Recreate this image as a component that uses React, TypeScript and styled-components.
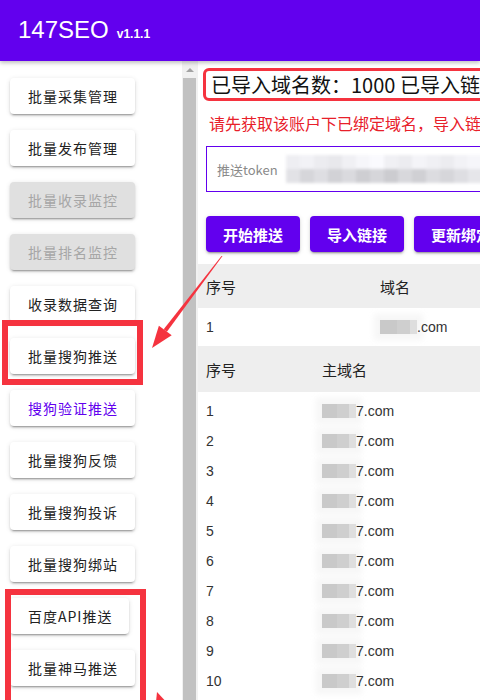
import React from 'react';
import styled, { createGlobalStyle } from 'styled-components';

const PURPLE = '#6200ee';
const MARK = '#f5333f';

const GlobalStyle = createGlobalStyle`
  html, body {
    margin: 0;
    padding: 0;
    overflow: hidden;
    background: #fff;
  }
  body {
    font-family: 'Noto Sans CJK SC', 'Liberation Sans', sans-serif;
    color: #222;
  }
`;

const Page = styled.div`
  position: relative;
  width: 480px;
  height: 700px;
  overflow: hidden;
  display: flex;
  flex-direction: column;
`;

const Header = styled.header`
  flex: none;
  height: 61px;
  background: ${PURPLE};
  display: flex;
  align-items: baseline;
  padding: 15px 0 0 18px;
  box-sizing: border-box;
  color: #fff;
  box-shadow: 0 2px 4px rgba(0, 0, 0, 0.25);
  position: relative;
  z-index: 1;
`;

const Brand = styled.span`
  font-family: 'Liberation Sans', Arial, sans-serif;
  font-size: 24px;
  line-height: 30px;
`;

const Version = styled.span`
  font-family: 'Liberation Sans', Arial, sans-serif;
  font-size: 12px;
  font-weight: bold;
  margin-left: 8px;
`;

const Body = styled.div`
  flex: 1;
  display: flex;
  min-height: 0;
`;

const Sidebar = styled.nav`
  flex: none;
  width: 172px;
  padding: 17px 0 0 10px;
  display: flex;
  flex-direction: column;
  align-items: flex-start;
  gap: 16px;
`;

const NavButton = styled.button<{ $disabled?: boolean; $active?: boolean }>`
  height: 36px;
  padding: 0 17px 0 18px;
  border: none;
  border-radius: 4px;
  font-family: 'Noto Sans CJK SC', sans-serif;
  font-size: 14px;
  letter-spacing: 1px;
  white-space: nowrap;
  cursor: pointer;
  background: ${({ $disabled }) => ($disabled ? '#e0e0e0' : '#fff')};
  color: ${({ $disabled, $active }) => ($disabled ? '#a6a6a6' : $active ? PURPLE : '#222')};
  box-shadow: 0 3px 1px -2px rgba(0, 0, 0, 0.2), 0 2px 2px 0 rgba(0, 0, 0, 0.14),
    0 1px 5px 0 rgba(0, 0, 0, 0.12);
`;

const ScrollTrack = styled.div`
  flex: none;
  width: 16px;
  background: #f1f1f1;
  display: flex;
  flex-direction: column;
  align-items: stretch;
`;

const ScrollArrow = styled.div`
  height: 17px;
  display: flex;
  align-items: center;
  justify-content: center;
  &:after {
    content: '';
    border-left: 4px solid transparent;
    border-right: 4px solid transparent;
    border-bottom: 4px solid #a3a3a3;
  }
`;

const ScrollThumb = styled.div`
  flex: 1;
  margin: 0 2px 0 1px;
  background: #c1c1c1;
`;

const Main = styled.main`
  flex: 1;
  min-width: 0;
  overflow: hidden;
`;

const CountBox = styled.div`
  margin: 7px 0 0 5px;
  width: max-content;
  height: 33px;
  box-sizing: border-box;
  border: 3px solid ${MARK};
  border-radius: 6px;
  padding: 0 5px;
  display: flex;
  align-items: center;
  font-size: 20px;
  white-space: nowrap;
  color: #111;
`;

const Notice = styled.div`
  margin: 11px 0 0 11px;
  font-size: 16px;
  line-height: 22px;
  color: #e8202a;
  white-space: nowrap;
`;

const TokenField = styled.div`
  margin: 12px 0 0 8px;
  width: 320px;
  height: 46px;
  box-sizing: border-box;
  border: 1px solid ${PURPLE};
  display: flex;
  align-items: center;
  padding-left: 10px;
  gap: 8px;
`;

const Placeholder = styled.span`
  font-size: 13px;
  color: #8a8a8a;
  white-space: nowrap;
`;

const MosaicGrid = styled.div`
  display: grid;
  grid-template-columns: repeat(15, 14px);
  grid-template-rows: 14px 14px;
  filter: blur(1.5px);
`;

const MosaicCell = styled.span<{ $shade: number }>`
  background: ${({ $shade }) => `rgb(${$shade}, ${$shade}, ${$shade + 4})`};
`;

const ActionRow = styled.div`
  margin: 24px 0 0 8px;
  display: flex;
  gap: 10px;
  white-space: nowrap;
`;

const ActionButton = styled.button`
  flex: none;
  width: 94px;
  height: 36px;
  border: none;
  border-radius: 4px;
  background: ${PURPLE};
  color: #fff;
  font-family: 'Noto Sans CJK SC', sans-serif;
  font-size: 15px;
  font-weight: bold;
  box-shadow: 0 3px 1px -2px rgba(0, 0, 0, 0.2), 0 2px 2px 0 rgba(0, 0, 0, 0.14),
    0 1px 5px 0 rgba(0, 0, 0, 0.12);
  text-align: left;
  padding-left: 17px;
`;

const Table = styled.div<{ $gap?: number }>`
  width: 100%;
  margin-top: ${({ $gap }) => $gap ?? 0}px;
`;

const HeadRow = styled.div<{ $split: number }>`
  display: grid;
  grid-template-columns: ${({ $split }) => `${$split}px 1fr`};
  height: ${({ $split }) => ($split > 150 ? 44 : 46)}px;
  align-items: center;
  background: #eeeeee;
  font-size: 15px;
  color: #222;
`;

const DataRow = styled.div<{ $split: number; $tall?: boolean }>`
  display: grid;
  grid-template-columns: ${({ $split }) => `${$split}px 1fr`};
  height: ${({ $tall }) => ($tall ? 38 : 30)}px;
  align-items: center;
  font-family: 'Liberation Sans', Arial, sans-serif;
  font-size: 14px;
  color: #333;
`;

const Cell = styled.span`
  padding-left: 8px;
  white-space: nowrap;
  display: flex;
  align-items: center;
`;

const Rows = styled.div`
  padding-top: 4px;
`;

const Blur = styled.span<{ $w: number }>`
  display: inline-block;
  width: ${({ $w }) => $w}px;
  height: 14px;
  background: linear-gradient(90deg, #c9c9c9 0 45%, #cfcfcf 45% 80%, #dedede 80%);
  box-shadow: 0 0 6px 6px rgba(240, 240, 240, 0.6);
`;

const Mark = styled.div<{ $x: number; $y: number; $w: number; $h: number }>`
  position: absolute;
  left: ${({ $x }) => $x}px;
  top: ${({ $y }) => $y}px;
  width: ${({ $w }) => $w}px;
  height: ${({ $h }) => $h}px;
  box-sizing: border-box;
  border: 6px solid ${MARK};
  pointer-events: none;
`;

const Arrows = styled.svg`
  position: absolute;
  left: 0;
  top: 0;
  pointer-events: none;
`;

const navItems: { label: string; disabled?: boolean; active?: boolean }[] = [
  { label: '批量采集管理' },
  { label: '批量发布管理' },
  { label: '批量收录监控', disabled: true },
  { label: '批量排名监控', disabled: true },
  { label: '收录数据查询' },
  { label: '批量搜狗推送' },
  { label: '搜狗验证推送', active: true },
  { label: '批量搜狗反馈' },
  { label: '批量搜狗投诉' },
  { label: '批量搜狗绑站' },
  { label: '百度API推送' },
  { label: '批量神马推送' },
];

const mosaicShades = [
  238, 242, 236, 232, 240, 246, 250, 240, 236, 244, 240, 236, 242, 246, 240,
  226, 214, 222, 210, 218, 206, 214, 204, 216, 208, 220, 214, 222, 230, 226,
];

export default function App() {
  return (
    <Page>
      <GlobalStyle />
      <Header>
        <Brand>147SEO</Brand>
        <Version>v1.1.1</Version>
      </Header>
      <Body>
        <Sidebar>
          {navItems.map((item) => (
            <NavButton key={item.label} $disabled={item.disabled} $active={item.active}>
              {item.label}
            </NavButton>
          ))}
        </Sidebar>
        <ScrollTrack>
          <ScrollArrow />
          <ScrollThumb />
        </ScrollTrack>
        <Main>
          <CountBox>已导入域名数：1000 已导入链接数：0</CountBox>
          <Notice>请先获取该账户下已绑定域名，导入链接后开始推送</Notice>
          <TokenField>
            <Placeholder>推送token</Placeholder>
            <MosaicGrid>
              {mosaicShades.map((s, i) => (
                <MosaicCell key={i} $shade={s} />
              ))}
            </MosaicGrid>
          </TokenField>
          <ActionRow>
            <ActionButton>开始推送</ActionButton>
            <ActionButton>导入链接</ActionButton>
            <ActionButton>更新绑定</ActionButton>
          </ActionRow>
          <Table $gap={12}>
            <HeadRow $split={174}>
              <Cell>序号</Cell>
              <Cell>域名</Cell>
            </HeadRow>
            <DataRow $split={174} $tall>
              <Cell>1</Cell>
              <Cell>
                <Blur $w={37} />
                .com
              </Cell>
            </DataRow>
          </Table>
          <Table>
            <HeadRow $split={116}>
              <Cell>序号</Cell>
              <Cell>主域名</Cell>
            </HeadRow>
            <Rows>
              {Array.from({ length: 10 }, (_, i) => (
                <DataRow key={i} $split={116}>
                  <Cell>{i + 1}</Cell>
                  <Cell>
                    <Blur $w={34} />
                    7.com
                  </Cell>
                </DataRow>
              ))}
            </Rows>
          </Table>
        </Main>
      </Body>
      <Mark $x={2} $y={320} $w={141} $h={65} />
      <Mark $x={5} $y={589} $w={141} $h={130} />
      <Arrows width="480" height="700" viewBox="0 0 480 700">
        <polygon points="221.5,256 222.5,256 166.9,331.7 163.7,329.3" fill={MARK} />
        <polygon points="152,348 171.7,335.3 158.9,325.7" fill={MARK} />
        <polygon points="157,692 170,706 155,712" fill={MARK} />
      </Arrows>
    </Page>
  );
}
